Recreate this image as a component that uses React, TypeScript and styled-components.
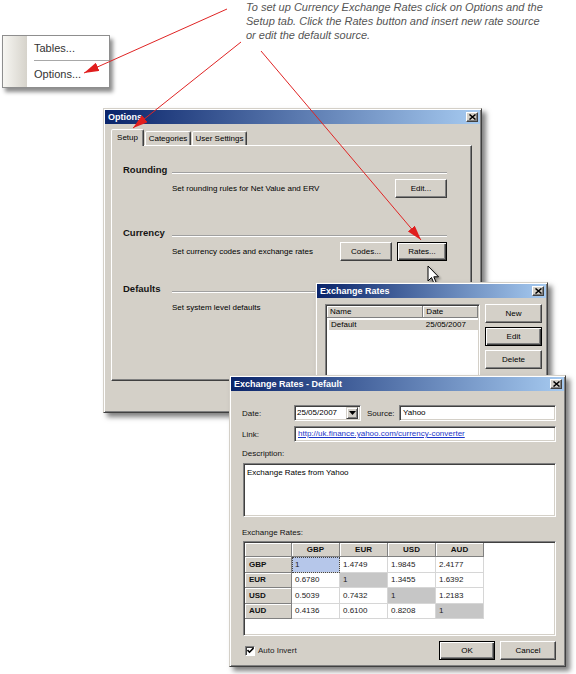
import { Fragment } from 'react';
import styled, { createGlobalStyle } from 'styled-components';

const GlobalStyle = createGlobalStyle`
  html, body {
    margin: 0;
    padding: 0;
    background: #fff;
  }
  body {
    font-family: 'Liberation Sans', Arial, sans-serif;
  }
`;

const Canvas = styled.div`
  position: relative;
  width: 576px;
  height: 674px;
  overflow: hidden;
  background: #fff;
  font-family: 'Liberation Sans', Arial, sans-serif;
  font-size: 8px;
  color: #000;
`;

/* ---------- popup menu ---------- */

const PopupMenu = styled.div`
  position: absolute;
  left: 2px;
  top: 35px;
  width: 108px;
  height: 53px;
  box-sizing: border-box;
  border: 1px solid #8e8e8e;
  background: #fff;
  display: flex;
  box-shadow: 3px 4px 4px rgba(0, 0, 0, 0.45);
`;

const MenuStrip = styled.div`
  width: 24px;
  background: linear-gradient(to right, #f7f6f2, #d6d3cb);
`;

const MenuList = styled.div`
  flex: 1;
  display: flex;
  flex-direction: column;
`;

const MenuItem = styled.div`
  height: 24px;
  line-height: 24px;
  padding-left: 7px;
  font-size: 11px;
  color: #333;
`;

const MenuSeparator = styled.div`
  height: 1px;
  background: #a8a8a8;
  margin: 0 0 1px 7px;
`;

/* ---------- annotation ---------- */

const Note = styled.div`
  position: absolute;
  left: 246px;
  top: 0;
  font-size: 11px;
  font-style: italic;
  line-height: 14px;
  color: #555;
  white-space: nowrap;
`;

/* ---------- window chrome ---------- */

const Window = styled.div<{ $x: number; $y: number; $w: number; $h: number }>`
  position: absolute;
  left: ${(p) => p.$x}px;
  top: ${(p) => p.$y}px;
  width: ${(p) => p.$w}px;
  height: ${(p) => p.$h}px;
  box-sizing: border-box;
  padding: 1px;
  background: #d4d0c8;
  border: 1px solid;
  border-color: #d4d0c8 #404040 #404040 #d4d0c8;
  box-shadow: inset 1px 1px #fff, inset -1px -1px #808080, 4px 4px 5px rgba(0, 0, 0, 0.5);
  display: flex;
  flex-direction: column;
`;

const TitleBar = styled.div`
  height: 14px;
  flex: none;
  display: flex;
  align-items: center;
  justify-content: space-between;
  padding: 0 2px 0 3px;
  background: linear-gradient(to right, #0a246a, #a6caf0);
  color: #fff;
  font-weight: bold;
  font-size: 9px;
`;

const CloseButton = styled.div`
  width: 12px;
  height: 10px;
  box-sizing: border-box;
  background: #d4d0c8;
  border: 1px solid;
  border-color: #fff #404040 #404040 #fff;
  box-shadow: inset -1px -1px #808080;
  display: flex;
  align-items: center;
  justify-content: center;
`;

const Button = styled.button<{ $w: number; $h?: number; $default?: boolean }>`
  width: ${(p) => p.$w}px;
  height: ${(p) => p.$h ?? 18}px;
  box-sizing: border-box;
  padding: 0;
  margin: 0;
  font-family: inherit;
  font-size: 8px;
  color: #000;
  background: #d4d0c8;
  border: 1px solid;
  border-color: ${(p) => (p.$default ? '#000' : '#fff #404040 #404040 #fff')};
  box-shadow: ${(p) =>
    p.$default
      ? 'inset 1px 1px #fff, inset -1px -1px #404040, inset -2px -2px #808080'
      : 'inset -1px -1px #808080'};
`;

/* ---------- options dialog ---------- */

const DialogBody = styled.div<{ $pad: string }>`
  flex: 1;
  display: flex;
  flex-direction: column;
  padding: ${(p) => p.$pad};
`;

const TabStrip = styled.div`
  display: flex;
  align-items: flex-end;
  height: 16px;
`;

const Tab = styled.div<{ $w: number; $active?: boolean }>`
  width: ${(p) => p.$w}px;
  height: ${(p) => (p.$active ? 17 : 14)}px;
  margin-bottom: ${(p) => (p.$active ? -1 : 0)}px;
  margin-right: 1px;
  box-sizing: border-box;
  border: 1px solid;
  border-bottom: none;
  border-color: #fff #404040 transparent #fff;
  border-radius: 2px 2px 0 0;
  box-shadow: inset -1px 0 #808080;
  background: #d4d0c8;
  position: relative;
  z-index: ${(p) => (p.$active ? 1 : 0)};
  display: flex;
  align-items: center;
  justify-content: center;
  padding-bottom: ${(p) => (p.$active ? 2 : 0)}px;
`;

const TabPanel = styled.div`
  height: 236px;
  box-sizing: border-box;
  border: 1px solid;
  border-color: #fff #404040 #404040 #fff;
  box-shadow: inset -1px -1px #808080;
  padding: 18px 24px 0 11px;
  display: flex;
  flex-direction: column;
`;

const Section = styled.div<{ $h: number }>`
  height: ${(p) => p.$h}px;
  flex: none;
  display: grid;
  grid-template-columns: 49px 1fr;
  grid-template-rows: 12px 18px;
  row-gap: 3px;
`;

const SectionLabel = styled.div`
  font-size: 9.5px;
  font-weight: bold;
  line-height: 12px;
  color: #141414;
`;

const Rule = styled.div`
  margin-top: 8px;
  height: 0;
  border-top: 1px solid #a0a0a0;
  border-bottom: 1px solid #fff;
`;

const SectionRow = styled.div`
  grid-column: 2;
  display: flex;
  align-items: center;
  justify-content: space-between;
`;

const ButtonGroup = styled.div<{ $dir?: 'row' | 'column'; $gap: number }>`
  display: flex;
  flex-direction: ${(p) => p.$dir ?? 'row'};
  gap: ${(p) => p.$gap}px;
`;

/* ---------- exchange rates list ---------- */

const ListRow = styled.div`
  display: flex;
  gap: 5px;
`;

const Sunken = styled.div<{ $w?: number; $h: number }>`
  ${(p) => (p.$w ? `width: ${p.$w}px;` : '')}
  height: ${(p) => p.$h}px;
  flex: none;
  box-sizing: border-box;
  background: #fff;
  border: 1px solid;
  border-color: #808080 #fff #fff #808080;
  box-shadow: inset 1px 1px #404040, inset -1px -1px #d4d0c8;
  padding: 1px;
  overflow: hidden;
`;

const ListHeader = styled.div`
  display: flex;
  height: 12px;
`;

const ListHeadCell = styled.div<{ $w: number }>`
  width: ${(p) => p.$w}px;
  box-sizing: border-box;
  background: #d4d0c8;
  border-right: 1px solid #808080;
  border-bottom: 1px solid #808080;
  box-shadow: inset 1px 1px #fff;
  padding-left: 3px;
  line-height: 11px;
`;

const ListItem = styled.div`
  display: flex;
  height: 10px;
  margin: 2px 0 0 2px;
  background: #d4d0c8;
  line-height: 10px;
`;

const ListCell = styled.div<{ $w: number }>`
  width: ${(p) => p.$w}px;
  padding-left: 2px;
`;

/* ---------- rate source dialog ---------- */

const FieldRow = styled.div<{ $cols: string; $mt?: number }>`
  display: grid;
  grid-template-columns: ${(p) => p.$cols};
  align-items: center;
  margin-top: ${(p) => p.$mt ?? 0}px;
  height: 16px;
`;

const FieldLabel = styled.div<{ $pl?: number }>`
  padding-left: ${(p) => p.$pl ?? 0}px;
  color: #111;
`;

const Input = styled.div<{ $link?: boolean }>`
  height: 16px;
  box-sizing: border-box;
  background: #fff;
  border: 1px solid;
  border-color: #808080 #fff #fff #808080;
  box-shadow: inset 1px 1px #404040, inset -1px -1px #d4d0c8;
  padding: 0 3px;
  line-height: 14px;
  white-space: nowrap;
  overflow: hidden;
  color: ${(p) => (p.$link ? '#1b35c9' : '#000')};
  text-decoration: ${(p) => (p.$link ? 'underline' : 'none')};
`;

const Combo = styled(Input)`
  display: flex;
  justify-content: space-between;
  padding: 0 2px 0 2px;
`;

const DropButton = styled.div`
  width: 12px;
  height: 12px;
  margin-top: 1px;
  box-sizing: border-box;
  background: #d4d0c8;
  border: 1px solid;
  border-color: #d4d0c8 #404040 #404040 #d4d0c8;
  box-shadow: inset 1px 1px #fff, inset -1px -1px #808080;
  display: flex;
  align-items: center;
  justify-content: center;
`;

const PlainLabel = styled.div<{ $mt: number }>`
  margin-top: ${(p) => p.$mt}px;
  height: 10px;
  line-height: 10px;
  color: #111;
`;

const TextBox = styled(Sunken)`
  margin: 4px 0 0 1px;
  padding: 4px 3px;
  line-height: 10px;
`;

const GridBox = styled(Sunken)`
  margin: 3px 0 0 1px;
`;

const RatesGrid = styled.div`
  display: grid;
  grid-template-columns: 47px repeat(4, 48px);
  grid-template-rows: 14px repeat(4, 15.5px);
  width: max-content;
`;

const HeadCell = styled.div<{ $left?: boolean }>`
  box-sizing: border-box;
  background: #d4d0c8;
  border-right: 1px solid #808080;
  border-bottom: 1px solid #808080;
  box-shadow: inset 1px 1px #fff;
  font-weight: bold;
  display: flex;
  align-items: center;
  justify-content: ${(p) => (p.$left ? 'flex-start' : 'center')};
  padding-left: ${(p) => (p.$left ? 4 : 0)}px;
  color: #111;
`;

const DataCell = styled.div<{ $tone?: 'focus' | 'self' }>`
  box-sizing: border-box;
  border-right: 1px solid #d6d6d6;
  border-bottom: 1px solid #d6d6d6;
  background: ${(p) => (p.$tone === 'focus' ? '#b6c7ea' : p.$tone === 'self' ? '#c6c6c6' : '#fff')};
  outline: ${(p) => (p.$tone === 'focus' ? '1px dotted #444' : 'none')};
  outline-offset: -1px;
  padding-left: 3px;
  display: flex;
  align-items: center;
  color: #222;
`;

const Footer = styled.div`
  margin-top: 5px;
  height: 19px;
  display: flex;
  align-items: center;
  justify-content: space-between;
`;

const CheckLabel = styled.div`
  display: flex;
  align-items: center;
  gap: 3px;
  margin-left: 3px;
  color: #222;
`;

const CheckBox = styled.div`
  width: 10px;
  height: 10px;
  box-sizing: border-box;
  background: #fff;
  border: 1px solid;
  border-color: #808080 #fff #fff #808080;
  box-shadow: inset 1px 1px #404040;
  display: flex;
  align-items: center;
  justify-content: center;
`;

/* ---------- overlays ---------- */

const Overlay = styled.svg`
  position: absolute;
  left: 0;
  top: 0;
  z-index: 10;
  pointer-events: none;
`;

const Pointer = styled.svg`
  position: absolute;
  left: 427px;
  top: 265px;
  filter: drop-shadow(2px 2px 1px rgba(0, 0, 0, 0.35));
`;

const sections = [
  { label: 'Rounding', text: 'Set rounding rules for Net Value and ERV', h: 63, buttons: [{ label: 'Edit...', w: 52 }] },
  {
    label: 'Currency',
    text: 'Set currency codes and exchange rates',
    h: 56,
    buttons: [
      { label: 'Codes...', w: 52 },
      { label: 'Rates...', w: 50, def: true },
    ],
  },
  { label: 'Defaults', text: 'Set system level defaults', h: 56, buttons: [] },
];

const currencies = ['GBP', 'EUR', 'USD', 'AUD'];
const rates = [
  ['1', '1.4749', '1.9845', '2.4177'],
  ['0.6780', '1', '1.3455', '1.6392'],
  ['0.5039', '0.7432', '1', '1.2183'],
  ['0.4136', '0.6100', '0.8208', '1'],
];

const arrows = [
  { x1: 227, y1: 9, x2: 84, y2: 73 },
  { x1: 241, y1: 42, x2: 133, y2: 128 },
  { x1: 261, y1: 51, x2: 421, y2: 240 },
];

function Close() {
  return (
    <CloseButton>
      <svg width="7" height="6" viewBox="0 0 7 6">
        <path d="M0.5 0.5 L6.5 5.5 M6.5 0.5 L0.5 5.5" stroke="#000" strokeWidth="1.5" />
      </svg>
    </CloseButton>
  );
}

export default function App() {
  return (
    <Canvas>
      <GlobalStyle />

      <PopupMenu>
        <MenuStrip />
        <MenuList>
          <MenuItem>Tables...</MenuItem>
          <MenuSeparator />
          <MenuItem>Options...</MenuItem>
        </MenuList>
      </PopupMenu>

      <Note>
        <div>To set up Currency Exchange Rates click on Options and the</div>
        <div>Setup tab. Click the Rates button and insert new rate source</div>
        <div>or edit the default source.</div>
      </Note>

      <Window $x={103} $y={108} $w={379} $h={305}>
        <TitleBar>
          <span>Options</span>
          <Close />
        </TitleBar>
        <DialogBody $pad="5px 8px 0 6px">
          <TabStrip>
            <Tab $w={33} $active>Setup</Tab>
            <Tab $w={46}>Categories</Tab>
            <Tab $w={55}>User Settings</Tab>
          </TabStrip>
          <TabPanel>
            {sections.map((s) => (
              <Section key={s.label} $h={s.h}>
                <SectionLabel>{s.label}</SectionLabel>
                <Rule />
                <SectionRow>
                  <span>{s.text}</span>
                  <ButtonGroup $gap={5}>
                    {s.buttons.map((b) => (
                      <Button key={b.label} $w={b.w} $h={19} $default={'def' in b && b.def}>
                        {b.label}
                      </Button>
                    ))}
                  </ButtonGroup>
                </SectionRow>
              </Section>
            ))}
          </TabPanel>
        </DialogBody>
      </Window>

      <Pointer width="14" height="21" viewBox="0 0 14 21">
        <path
          d="M1 1 L1 16 L4.5 12.5 L7 18.5 L9.2 17.6 L6.8 11.8 L11.5 11.8 Z"
          fill="#fff"
          stroke="#000"
          strokeWidth="1"
        />
      </Pointer>

      <Window $x={315} $y={282} $w={233} $h={150}>
        <TitleBar>
          <span>Exchange Rates</span>
          <Close />
        </TitleBar>
        <DialogBody $pad="6px 4px 0 8px">
          <ListRow>
            <Sunken $w={155} $h={130}>
              <ListHeader>
                <ListHeadCell $w={97}>Name</ListHeadCell>
                <ListHeadCell $w={55}>Date</ListHeadCell>
              </ListHeader>
              <ListItem>
                <ListCell $w={96}>Default</ListCell>
                <ListCell $w={54}>25/05/2007</ListCell>
              </ListItem>
            </Sunken>
            <ButtonGroup $dir="column" $gap={4}>
              <Button $w={57} $h={19}>New</Button>
              <Button $w={57} $h={19} $default>Edit</Button>
              <Button $w={57} $h={19}>Delete</Button>
            </ButtonGroup>
          </ListRow>
        </DialogBody>
      </Window>

      <Window $x={229} $y={375} $w={337} $h={292}>
        <TitleBar>
          <span>Exchange Rates - Default</span>
          <Close />
        </TitleBar>
        <DialogBody $pad="14px 8px 0 11px">
          <FieldRow $cols="52px 67px 38px 1fr">
            <FieldLabel>Date:</FieldLabel>
            <Combo>
              <span>25/05/2007</span>
              <DropButton>
                <svg width="7" height="4" viewBox="0 0 7 4">
                  <path d="M0 0 L7 0 L3.5 4 Z" fill="#000" />
                </svg>
              </DropButton>
            </Combo>
            <FieldLabel $pl={6}>Source:</FieldLabel>
            <Input>Yahoo</Input>
          </FieldRow>
          <FieldRow $cols="52px 1fr" $mt={5}>
            <FieldLabel>Link:</FieldLabel>
            <Input $link>http://uk.finance.yahoo.com/currency-converter</Input>
          </FieldRow>
          <PlainLabel $mt={7}>Description:</PlainLabel>
          <TextBox $h={54}>Exchange Rates from Yahoo</TextBox>
          <PlainLabel $mt={11}>Exchange Rates:</PlainLabel>
          <GridBox $h={95}>
            <RatesGrid>
              <HeadCell />
              {currencies.map((c) => (
                <HeadCell key={c}>{c}</HeadCell>
              ))}
              {rates.map((row, r) => (
                <Fragment key={currencies[r]}>
                  <HeadCell $left>{currencies[r]}</HeadCell>
                  {row.map((v, c) => (
                    <DataCell key={c} $tone={r === c ? (r === 0 ? 'focus' : 'self') : undefined}>
                      {v}
                    </DataCell>
                  ))}
                </Fragment>
              ))}
            </RatesGrid>
          </GridBox>
          <Footer>
            <CheckLabel>
              <CheckBox>
                <svg width="7" height="7" viewBox="0 0 7 7">
                  <path d="M0.5 3 L2.5 5.2 L6.5 1" fill="none" stroke="#000" strokeWidth="1.6" />
                </svg>
              </CheckBox>
              <span>Auto Invert</span>
            </CheckLabel>
            <ButtonGroup $gap={5}>
              <Button $w={56} $h={19} $default>OK</Button>
              <Button $w={56} $h={19}>Cancel</Button>
            </ButtonGroup>
          </Footer>
        </DialogBody>
      </Window>

      <Overlay width="576" height="674" viewBox="0 0 576 674">
        <defs>
          <marker
            id="head"
            markerWidth="15"
            markerHeight="9"
            refX="15"
            refY="4.5"
            orient="auto"
            markerUnits="userSpaceOnUse"
          >
            <path d="M0 0 L15 4.5 L0 9 Z" fill="#e01e1e" />
          </marker>
        </defs>
        {arrows.map((a, i) => (
          <line key={i} {...a} stroke="#e02424" strokeWidth="1" markerEnd="url(#head)" />
        ))}
      </Overlay>
    </Canvas>
  );
}
